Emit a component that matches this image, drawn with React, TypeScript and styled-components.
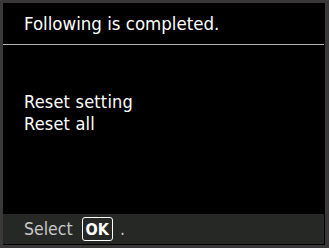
import { createGlobalStyle, styled } from "styled-components";

const Global = createGlobalStyle`
	html, body {
		margin: 0;
		padding: 0;
		background: #3a3838;
	}
	body {
		font-family: "DejaVu Sans Condensed", "DejaVu Sans", sans-serif;
	}
`;

const Frame = styled.div`
	width: 329px;
	height: 248px;
	box-sizing: border-box;
	padding: 3px 4px 3px 3px;
	background: #3a3838;
`;

const Screen = styled.div`
	height: 100%;
	display: flex;
	flex-direction: column;
	background: #000;
	border-right: 1px solid #000;
	border-bottom: 1px solid #000;
	box-sizing: border-box;
`;

const Header = styled.div`
	height: 42px;
	display: flex;
	align-items: center;
	padding-left: 21px;
	color: #fff;
	font-size: 18.5px;
	border-bottom: 1px solid #b4b4b4;
	box-sizing: border-box;
`;

const Body = styled.div`
	flex: 1;
	display: flex;
	flex-direction: column;
	padding: 47px 0 0 21px;
	gap: 3px;
`;

const Line = styled.div`
	color: #fff;
	font-size: 18px;
	line-height: 19px;
	letter-spacing: 0.2px;
`;

const Footer = styled.div`
	height: 30px;
	display: flex;
	align-items: center;
	gap: 7px;
	padding-left: 21px;
	background: #262826;
	color: #c8c8c8;
	font-size: 17.5px;
`;

const Key = styled.span`
	display: inline-flex;
	align-items: center;
	justify-content: center;
	height: 22px;
	padding: 0 3px;
	border: 1px solid #fff;
	border-radius: 3px;
	color: #fff;
	font-weight: bold;
	font-size: 16px;
	margin-left: 2px;
`;

const App = () => {
	return (
		<>
			<Global />
			<Frame>
				<Screen>
					<Header>Following is completed.</Header>
					<Body>
						<Line>Reset setting</Line>
						<Line>Reset all</Line>
					</Body>
					<Footer>
						Select <Key>OK</Key>.
					</Footer>
				</Screen>
			</Frame>
		</>
	);
};

export default App;
